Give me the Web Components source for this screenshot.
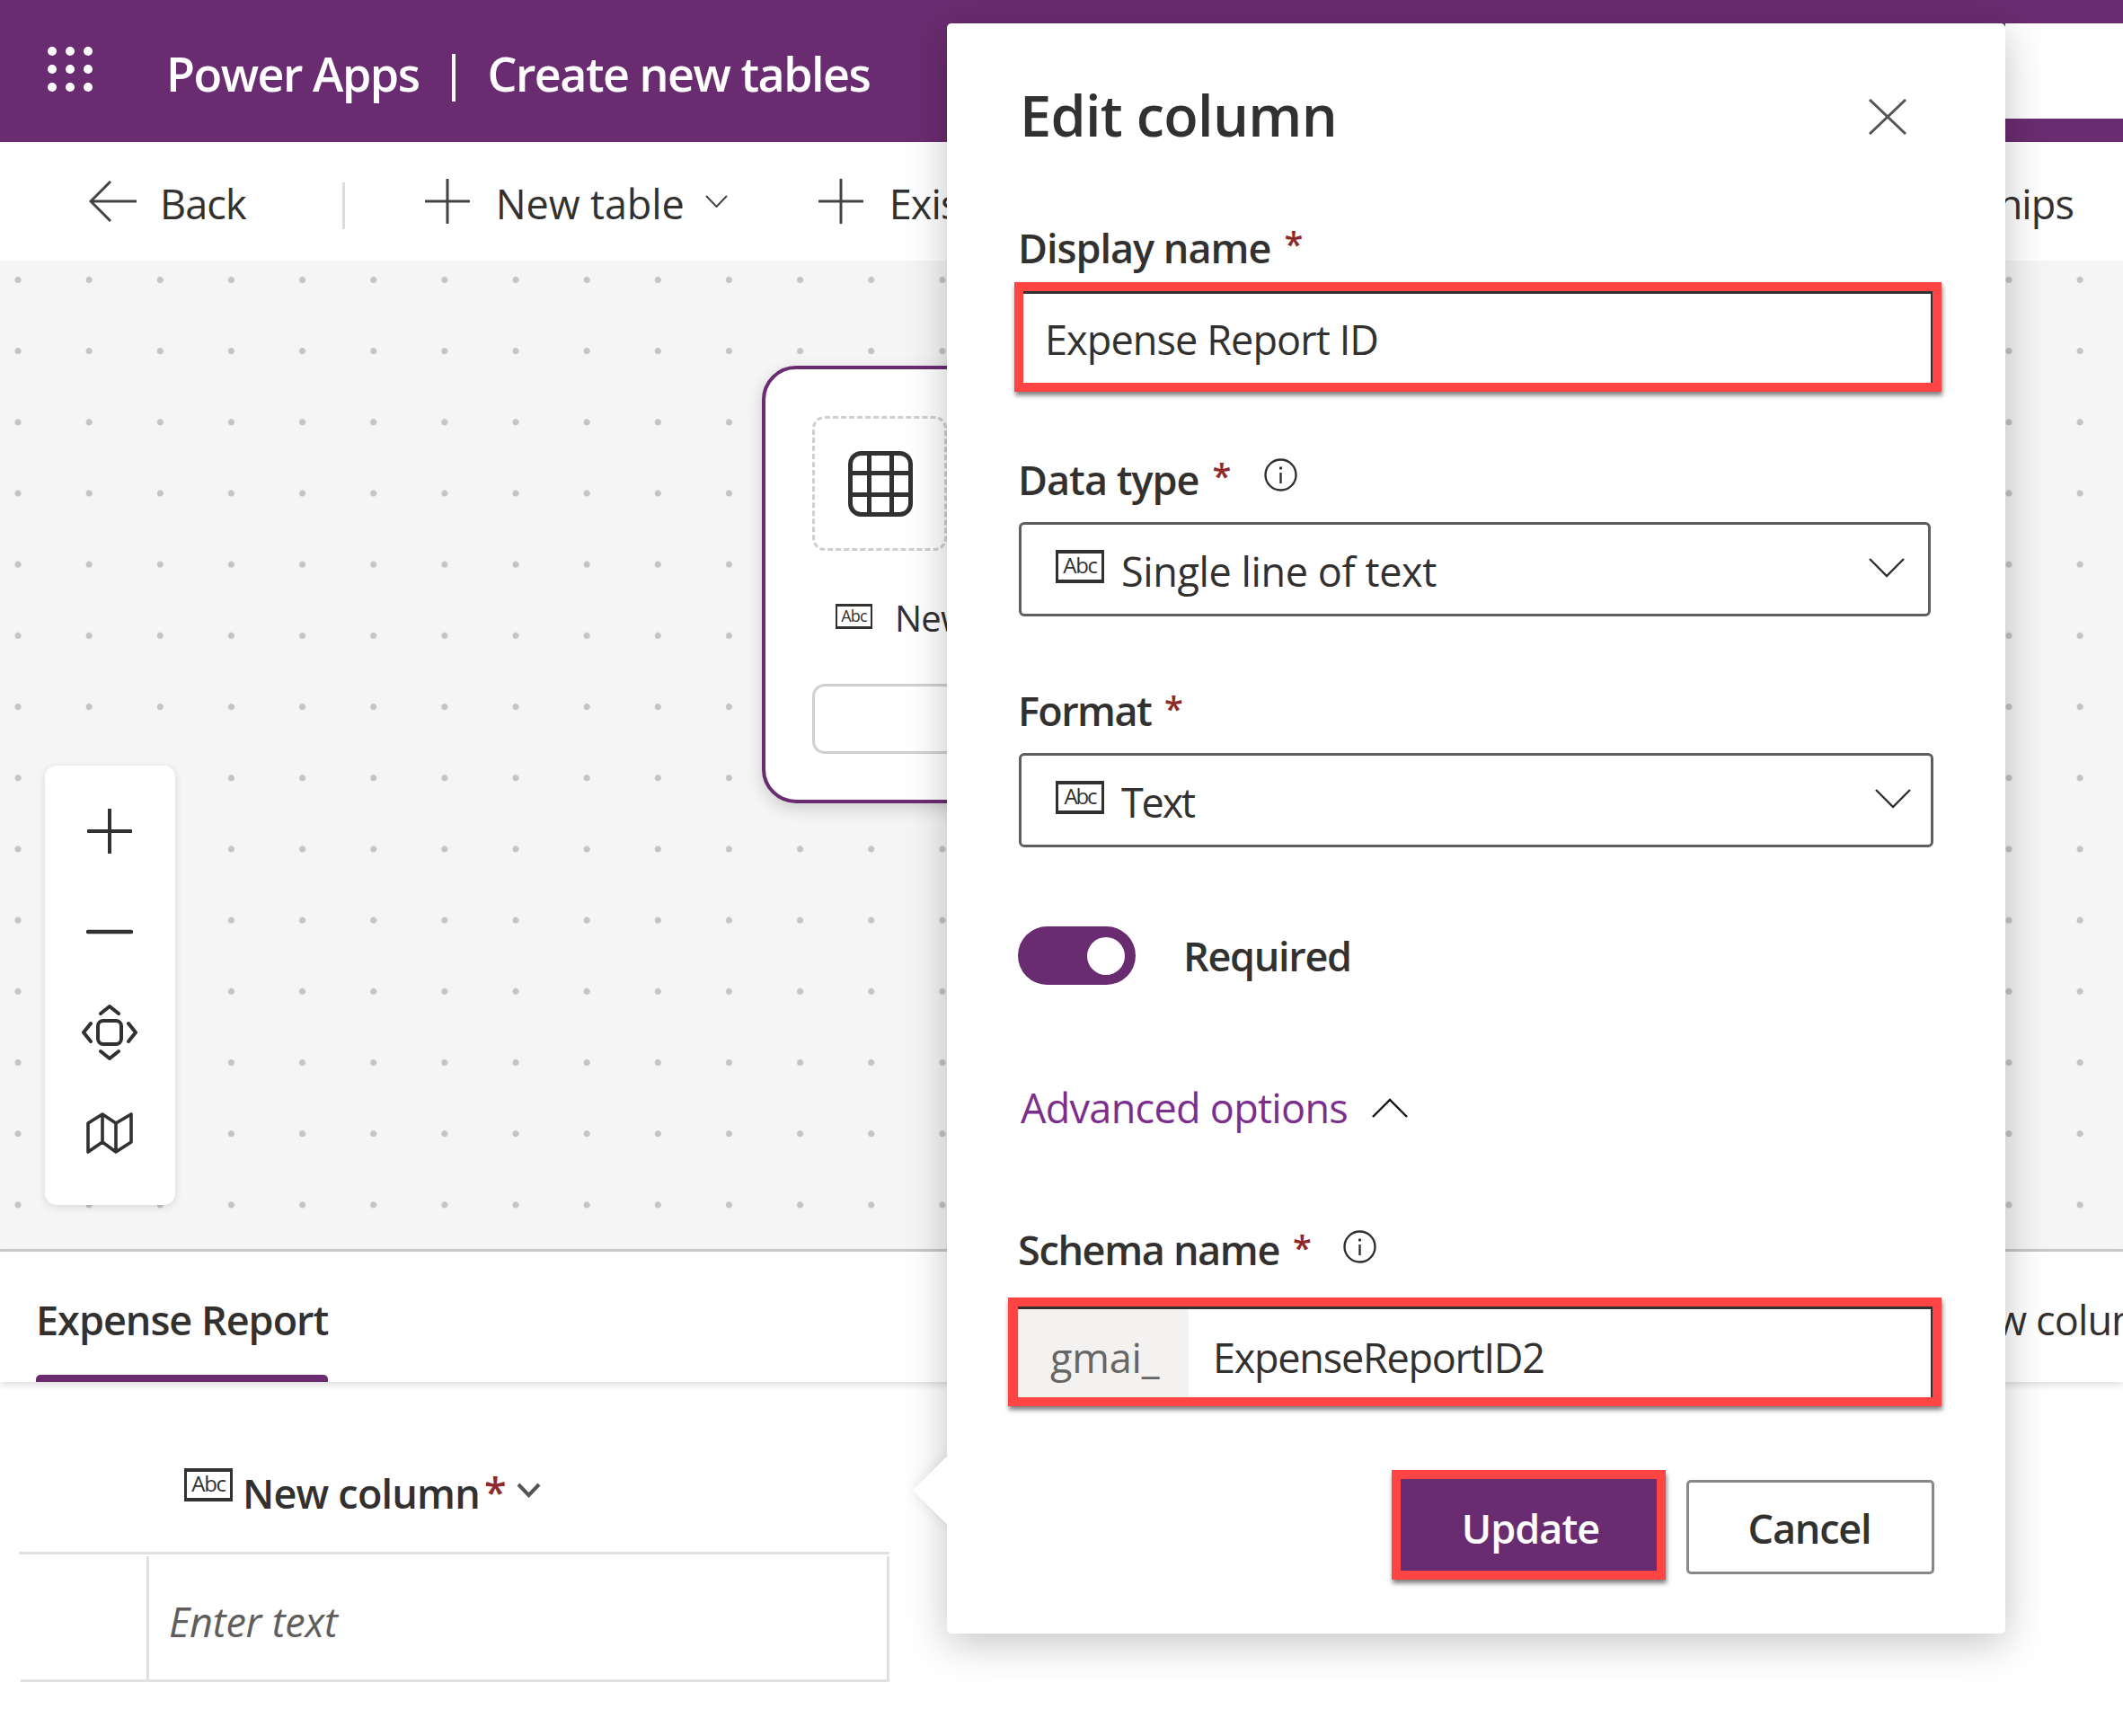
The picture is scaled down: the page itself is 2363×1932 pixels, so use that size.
<!DOCTYPE html>
<html lang="en"><head><meta charset="utf-8"><title>Power Apps | Create new tables</title>
<style>
html,body{margin:0;padding:0;background:#fff}
body{width:2363px;height:1932px;overflow:hidden;font-family:"Open Sans","Noto Sans",sans-serif;color:#323130}
</style></head><body>
<app-shell></app-shell>
<script>
const C=(name,html)=>{customElements.define(name,class extends HTMLElement{constructor(){super();this.attachShadow({mode:'open'}).innerHTML=html;}})};
const plus=(s=50,c='#444',w=3)=>`<svg width="${s}" height="${s}" viewBox="0 0 50 50" style="display:block;flex:none"><path d="M25 1V49M1 25H49" fill="none" stroke="${c}" stroke-width="${w}" stroke-linecap="round"/></svg>`;

C('abc-icon',`<style>:host{display:inline-flex;flex:none;box-sizing:border-box;width:var(--w,54px);height:var(--h,37px);border:3px solid #323130;border-bottom-width:4px;border-top-width:4px;align-items:center;justify-content:center;background:#fff;font:400 var(--fs,24px)/1 "Open Sans",sans-serif;color:#323130;letter-spacing:var(--ls,-1.3px)}span{display:block;margin-top:-3px}</style><span>Abc</span>`);

C('info-icon',`<style>:host{display:block;flex:none;width:37px;height:37px}svg{display:block}</style><svg width="37" height="37" viewBox="0 0 37 37"><circle cx="18.5" cy="18.5" r="17" fill="none" stroke="#323130" stroke-width="2.4"/><path d="M18.5 16V28" stroke="#323130" stroke-width="2.4"/><circle cx="18.5" cy="11" r="1.7" fill="#323130"/></svg>`);

C('req-label',`<style>:host{display:flex;align-items:center;height:56px;font:600 45px/56px "Open Sans",sans-serif;color:#323130;letter-spacing:var(--ls,-1px);white-space:nowrap}
span{display:block;margin:var(--mt,-4px) 0 0 -2px}
i{font-style:normal;color:#8e2a2a;font-weight:600;margin-left:15px;margin-top:-10px;font-size:38px;letter-spacing:0}
::slotted(info-icon){margin:-12px 0 0 var(--gap,37px)}</style><span><slot name="t"></slot></span><i>*</i><slot></slot>`);

C('select-box',`<style>:host{display:flex;box-sizing:border-box;height:105px;border:3px solid #605e5c;border-radius:6px;align-items:center;padding:0 var(--pr,26px) 0 38px;font:400 45px/56px "Open Sans",sans-serif;color:#323130;letter-spacing:var(--ls,-.4px);background:#fff}
abc-icon{margin:-6px 19px 0 0}span{flex:1;margin-top:5px}svg{display:block;margin-top:-4px}</style>
<abc-icon></abc-icon><span><slot></slot></span><svg width="40" height="22" viewBox="0 0 40 22"><path d="M1 1L20 20L39 1" fill="none" stroke="#323130" stroke-width="2.4"/></svg>`);

C('red-frame',`<style>:host{display:block;box-sizing:border-box;border:10px solid #ff4444;box-shadow:1px 4px 5px rgba(0,0,0,.5);background:#fff}
div{box-sizing:border-box;height:100%;border-top:3px solid #323130;border-right:2px solid #323130;display:flex;align-items:center;font:400 45px/56px "Open Sans",sans-serif;color:#323130;letter-spacing:var(--ls,-.9px)}</style><div part="in"><slot></slot></div>`);

C('app-header',`<style>:host{display:block;position:relative;height:158px;background:#6a2c70;color:#fff}
.row{display:flex;align-items:center;height:158px;padding-left:53px;font:600 52px/60px "Open Sans",sans-serif;letter-spacing:-1.5px;white-space:nowrap}
.row span{display:block;margin-top:5px}
.waffle{display:grid;grid-template-columns:repeat(3,10px);grid-auto-rows:10px;gap:10px;margin:-4px 82px 0 0}
.waffle b{display:block;border-radius:50%;background:#fff}
.sep{width:4px;height:53px;background:#fff;margin:15px 35px 0 37px}
.patch{position:absolute;left:2232px;top:26px;width:131px;height:106px;background:#fff}</style>
<div class="row"><div class="waffle"><b></b><b></b><b></b><b></b><b></b><b></b><b></b><b></b><b></b></div><span>Power Apps</span><div class="sep"></div><span>Create new tables</span></div><div class="patch"></div>`);

C('app-toolbar',`<style>:host{display:flex;align-items:center;box-sizing:border-box;height:132px;background:#fff;padding:0 55px 0 99px;font:400 45px/56px "Open Sans",sans-serif;color:#323130;letter-spacing:-.9px;white-space:nowrap}
span{display:block;margin-top:5px}.sep{width:3px;height:52px;background:#ddd;margin:10px 89px 0 107px}svg{display:block;flex:none}
.end{margin-left:auto}</style>
<svg width="54" height="46" viewBox="0 0 54 46"><path d="M53 23H2M24 1L2 23L24 45" fill="none" stroke="#444" stroke-width="3"/></svg><span style="margin-left:25px">Back</span><div class="sep"></div>
${plus()}<span style="margin-left:29px;letter-spacing:-.1px">New table</span><svg style="margin:0 101px 0 23px" width="25" height="14" viewBox="0 0 25 14"><path d="M1 1L12.500 13L24 1" fill="none" stroke="#444" stroke-width="2"/></svg>
${plus()}<span style="margin-left:29px">Existing table</span><span class="end">Relationships</span>`);

C('zoom-controls',`<style>:host{position:absolute;left:50px;top:562px;box-sizing:border-box;width:145px;height:489px;background:#fff;border-radius:13px;box-shadow:0 2px 10px rgba(0,0,0,.12);padding:17px 2px 17px 0;display:flex;flex-direction:column}
div{height:112px;display:flex;align-items:center;justify-content:center}svg{display:block}</style>
<div>${plus(50,'#323130',4)}</div>
<div><svg width="52" height="6" viewBox="0 0 52 6"><path d="M2 3H50" stroke="#323130" stroke-width="4.500" stroke-linecap="round"/></svg></div>
<div><svg width="62" height="62" viewBox="0 0 62 62" fill="none" stroke="#323130" stroke-width="4" stroke-linejoin="round" stroke-linecap="round"><rect x="18" y="18" width="26" height="26" rx="6"/><path d="M21 10L31 2L41 10M21 52L31 60L41 52M10 21L2 31L10 41M52 21L60 31L52 41"/></svg></div>
<div><svg width="52" height="48" viewBox="0 0 52 48" fill="none" stroke="#323130" stroke-width="3.600" stroke-linejoin="round"><path d="M2 45V13L18 3L33 13L50 3V34L33 45L18 34ZM18 3V34M33 13V45"/></svg></div>`);

C('table-card',`<style>:host{position:absolute;left:848px;top:117px;box-sizing:border-box;width:700px;height:487px;background:#fff;border:4px solid #6a2c70;border-radius:38px;box-shadow:0 6px 18px rgba(0,0,0,.16);padding:52px 0 0 52px;font:400 40px/52px "Open Sans",sans-serif;color:#323130;letter-spacing:-.8px;white-space:nowrap}
.ic{box-sizing:border-box;width:150px;height:150px;border:3px dashed #cfcfcf;border-radius:14px;display:flex;align-items:center;justify-content:center}
.ic svg{margin-left:1px}
.row{display:flex;align-items:center;height:52px;margin:49px 0 0 26px}
abc-icon{--w:41px;--h:28px;--fs:18px;--ls:-.9px;border-width:3px 2px;margin:-4px 25px 0 0}
.inp{box-sizing:border-box;height:78px;border:3px solid #d0d0d0;border-radius:14px;margin-top:47px;width:580px}svg{display:block}</style>
<div class="ic"><svg width="72" height="73" viewBox="0 0 72 73" fill="none" stroke="#323130" stroke-width="5"><rect x="2.500" y="2.500" width="67" height="68" rx="12"/><path d="M23.500 3V70M48.500 3V70M3 24.500H69M3 48.500H69"/></svg></div>
<div class="row"><abc-icon></abc-icon><span>New column</span></div><div class="inp"></div>`);

C('canvas-view',`<style>:host{display:block;position:relative;height:1100px;background-color:#f5f5f5;background-image:radial-gradient(circle at 20px 21.500px,#c4c4c4 3.200px,transparent 3.900px);background-size:79.150px 79.200px;overflow:hidden}</style><slot></slot>`);

C('table-panel',`<style>:host{display:block;position:relative;height:542px;background:#fff;border-top:3px solid #cbcbcb;box-sizing:border-box;font:400 45px/56px "Open Sans",sans-serif;letter-spacing:-.9px;color:#323130;white-space:nowrap}
.tabs{display:flex;height:145px;box-shadow:0 3px 8px rgba(0,0,0,.14);padding-left:40px;position:relative;box-sizing:border-box;overflow:hidden}
.tab{font-weight:600;height:145px;box-sizing:border-box;padding-top:48px;border-bottom:8px solid transparent;position:relative;letter-spacing:-1px}
.tab:after{content:"";position:absolute;left:0;right:0;bottom:-8px;height:8px;background:#6a2c70;border-radius:5px 5px 0 0}
.add{position:absolute;left:2164px;top:48px}
.head{display:flex;align-items:center;height:79px;margin:84px 0 0 205px;font-weight:600;letter-spacing:-.8px}
abc-icon{margin:-18px 11px 0 0}i{font-style:normal;color:#8e2a2a;font-weight:600;margin:-4px 11px 0 5px;letter-spacing:0}
.hchev{display:block;margin-top:-8px}
.grid{margin:26px 0 0 21px;width:969px;border-top:3px solid #e0e0e0}
.row{display:flex;height:137px;margin-top:2px;border-bottom:3px solid #e0e0e0;margin-left:2px}
.c0{width:140px;border-right:3px solid #e0e0e0}.c1{flex:1;border-right:3px solid #e0e0e0;display:flex;align-items:center;padding:8px 0 0 22px;font-style:italic;color:#605e5c;letter-spacing:-.2px}</style>
<div class="tabs"><div class="tab">Expense Report</div><span class="add">New column</span></div>
<div class="head"><abc-icon></abc-icon><span>New column</span><i>*</i><svg class="hchev" width="27" height="18" viewBox="0 0 27 18"><path d="M2 3L13.500 15L25 3" fill="none" stroke="#555" stroke-width="4"/></svg></div>
<div class="grid"><div class="row"><div class="c0"></div><div class="c1">Enter text</div></div></div>`);

C('edit-dialog',`<style>:host{position:absolute;left:1054px;top:26px;width:1178px;height:1792px;box-sizing:border-box;background:#fff;border-radius:5px;box-shadow:0 10px 46px rgba(0,0,0,.24);padding:64px 0 0 81px;color:#323130;z-index:5}
.beakbox{position:absolute;left:-70px;top:1553px;width:70px;height:160px;overflow:hidden}
.beak{position:absolute;left:43px;top:53px;width:53px;height:53px;background:#fff;transform:rotate(45deg);box-shadow:0 0 16px rgba(0,0,0,.1)}
.body{position:relative}
.head{display:flex;align-items:center;height:80px;position:relative}
h1{margin:-5px 0 0;font:600 63px/80px "Open Sans",sans-serif;letter-spacing:-.7px;white-space:nowrap}
.x{position:absolute;left:945px;top:20px;display:block}
.f1{margin:10px 0 0 -6px;width:1032px;height:122px;display:block}
.f1 span{padding:3px 0 0 24px}
.s1{margin:19px 0 0 -1px;width:1015px}.s2{margin:17px 0 0 -1px;width:1018px;--pr:22px;--ls:-2.2px}
.toggle{display:flex;align-items:center;margin:88px 0 0 -2px;height:65px;font:600 45px/56px "Open Sans",sans-serif;letter-spacing:-1.3px}
.sw{width:131px;height:65px;border-radius:33px;background:#6a2c70;position:relative;margin-right:53px}
.sw:after{content:"";position:absolute;left:77px;top:12px;width:42px;height:42px;border-radius:50%;background:#fff}
.adv{display:flex;align-items:center;height:56px;margin:109px 0 0 1px;font:400 45px/56px "Open Sans",sans-serif;letter-spacing:-.7px;color:#7c2e8e}
.adv svg{display:block;margin:-1px 0 0 27px}
.f2{margin:23px 0 0 -13px;width:1039px;height:121px;display:block;border-left-width:11px;--ls:-1.25px}
.pre{display:flex;align-items:center;align-self:stretch;width:188px;background:#f3f2f1;color:#666;padding:9px 0 0 34px;box-sizing:border-box;margin-left:2px;margin-right:27px;letter-spacing:-.2px}
.val{padding-top:9px}
.btns{display:flex;margin:71px 0 0 414px;align-items:flex-start;gap:23px}
.up{box-sizing:border-box;width:305px;height:122px;padding:7px 0 0 4px;border:10px solid #ff4444;box-shadow:1px 4px 5px rgba(0,0,0,.5);background:#6a2c70;color:#fff;display:flex;align-items:center;justify-content:center;font:600 45px/56px "Open Sans",sans-serif;letter-spacing:-1px}
.ca{box-sizing:border-box;width:276px;height:105px;margin-top:11px;padding:2px 2px 0 0;border:3px solid #8a8886;border-radius:5px;display:flex;align-items:center;justify-content:center;font:600 45px/56px "Open Sans",sans-serif;letter-spacing:-1.2px}
</style>
<div class="beakbox"><div class="beak"></div></div>
<div class="body">
<div class="head"><h1>Edit column</h1><svg class="x" width="42" height="40" viewBox="0 0 42 40"><path d="M1 1L41 39M41 1L1 39" fill="none" stroke="#555" stroke-width="3"/></svg></div>
<req-label style="margin-top:78px;--mt:-1px"><span slot="t">Display name</span></req-label>
<red-frame class="f1"><span>Expense Report ID</span></red-frame>
<req-label style="margin-top:70px;--ls:-1px;--mt:-1px"><span slot="t">Data type</span><info-icon></info-icon></req-label>
<select-box class="s1">Single line of text</select-box>
<req-label style="margin-top:79px;--ls:-1.6px"><span slot="t">Format</span></req-label>
<select-box class="s2">Text</select-box>
<div class="toggle"><div class="sw"></div><span>Required</span></div>
<div class="adv"><span>Advanced options</span><svg width="40" height="22" viewBox="0 0 40 22"><path d="M1 21L20 2L39 21" fill="none" stroke="#111" stroke-width="2.400"/></svg></div>
<req-label style="margin-top:104px;--ls:-1.35px;--gap:35px"><span slot="t">Schema name</span><info-icon></info-icon></req-label>
<red-frame class="f2"><span class="pre">gmai_</span><span class="val">ExpenseReportID2</span></red-frame>
<div class="btns"><div class="up">Update</div><div class="ca">Cancel</div></div>
</div>`);

C('app-shell',`<style>:host{display:block;position:relative;width:2363px;height:1932px;overflow:hidden}</style>
<app-header></app-header><app-toolbar></app-toolbar>
<canvas-view><table-card></table-card><zoom-controls></zoom-controls></canvas-view>
<table-panel></table-panel><edit-dialog></edit-dialog>`);
</script>
</body></html>
